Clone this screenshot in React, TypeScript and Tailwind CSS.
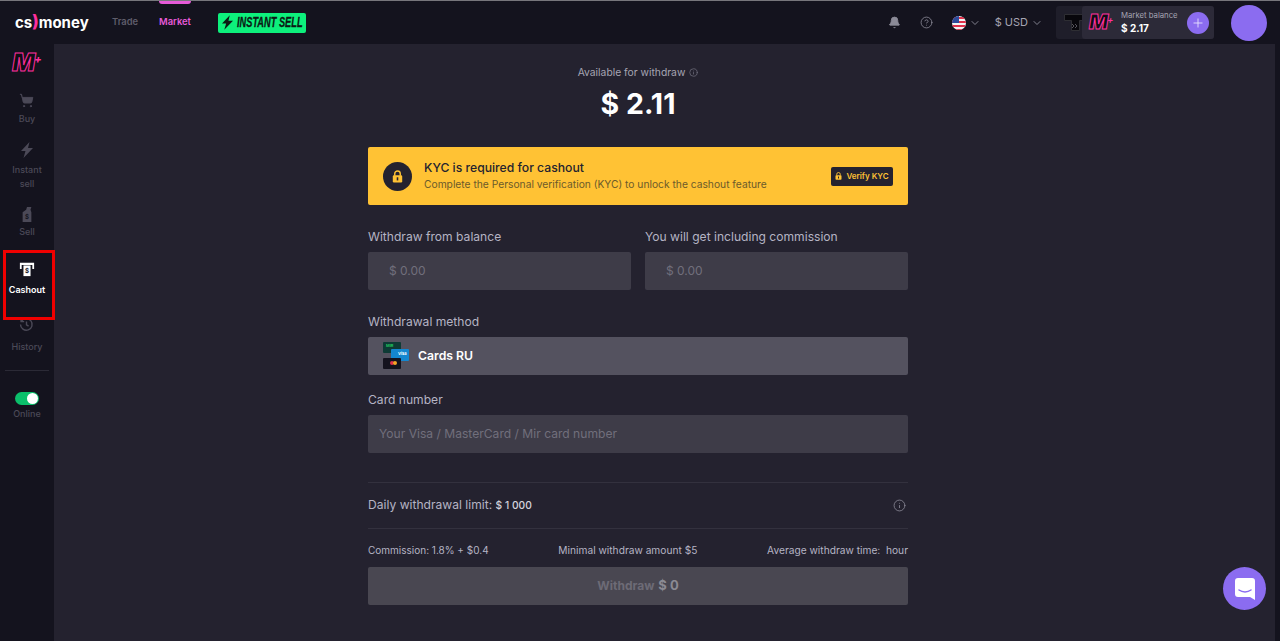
import React from 'react';
import { Bell, ChevronDown, CircleHelp, Info, Plus, ShoppingCart } from 'lucide-react';

const CashoutIcon = ({ className }: { className?: string }) => (
  <svg viewBox="0 0 18 18" className={className} fill="currentColor">
    <path d="M1 2h16v7h-2V4.500H3V9H1z" />
    <path d="M5 5h8v12H5z" />
    <text x="9" y="13.500" fontSize="7" fontWeight="700" textAnchor="middle" fill="#14131e">$</text>
  </svg>
);

const TagIcon = ({ className }: { className?: string }) => (
  <svg viewBox="0 0 16 18" className={className} fill="currentColor">
    <path d="M3 7l4-3 1-3h5l-1 3 1 3v11H3z" />
    <text x="8" y="14.500" fontSize="7" fontWeight="700" textAnchor="middle" fill="#14131e">$</text>
  </svg>
);

const HistoryIcon = ({ className }: { className?: string }) => (
  <svg viewBox="0 0 18 18" className={className} fill="none" stroke="currentColor" strokeWidth="1.700">
    <path d="M3 5a7 7 0 1 1-1.200 4" />
    <path d="M2.500 1.800v3.700h3.700" />
    <path d="M9 5.500V9.500l2.500 1.500" />
  </svg>
);

const BoltIcon = ({ className }: { className?: string }) => (
  <svg viewBox="0 0 12 16" className={className} fill="currentColor">
    <path d="M8.500 0 0 9h4.500L2.500 16 12 6H7z" />
  </svg>
);

const LockIcon = ({ className, hole }: { className?: string; hole: string }) => (
  <svg viewBox="0 0 14 16" className={className}>
    <path d="M3.500 7V4.500a3.500 3.500 0 0 1 7 0V7" fill="none" stroke="currentColor" strokeWidth="1.800" />
    <rect x="1" y="6.500" width="12" height="9" rx="1.500" fill="currentColor" />
    <rect x="6" y="9" width="2" height="4" fill={hole} />
  </svg>
);

// trade logo behind the market balance panel
const TradeLogo = ({ className }: { className?: string }) => (
  <svg viewBox="0 0 22 17" className={className}>
    <path d="M.5.500h21v6h-6v10h-8v-10h-7z" fill="#08070c" stroke="#2e2e33" />
    <path d="M8 10l2 2-2 2M11 10l2 2-2 2" fill="none" stroke="#55545c" strokeWidth="1" />
  </svg>
);

const MPlus = ({ size, plus }: { size: string; plus: string }) => (
  <span className={`${size} inline-flex items-start font-['Inter',sans-serif] font-black italic leading-none text-[#0f0d16] [-webkit-text-stroke:1px_#ff2f9e]`}>
    M
    <span className={`${plus} -ml-[1px] mt-[3px] font-bold text-[#ff2f9e] [-webkit-text-stroke:0]`}>+</span>
  </span>
);

const SideItem = ({ icon, label, labelClass, active }: { icon: React.ReactNode; label: React.ReactNode; labelClass: string; active?: boolean }) => (
  <div className={`flex flex-col items-center text-center text-[9px] leading-[14px] font-medium ${active ? 'text-white' : 'text-[#4b4957]'}`}>
    <div className="h-[15px] flex items-center justify-center">{icon}</div>
    <div className={labelClass}>{label}</div>
  </div>
);

const FieldLabel = ({ children }: { children: React.ReactNode }) => (
  <div className="text-[12.100px] leading-[18px] text-[#b5b4c4]">{children}</div>
);

export default function App() {
  return (
    <div className="h-[641px] w-[1280px] overflow-hidden bg-[#14131e] font-['Inter',sans-serif] flex flex-col">
      <header className="relative h-11 shrink-0 flex items-center bg-[#14131e] border-t border-[#77767c]">
        <div className="absolute left-[159px] top-0 h-[3px] w-8 rounded-b-sm bg-[#e65ad8]" />
        <div className="ml-[15px] -mt-[1px] w-[97px] flex items-center text-[15px] font-bold leading-none text-white">
          cs<span className="text-[#ff2f9e] font-extrabold text-[17px] -mt-[1px]">)</span>money
        </div>
        <span className="w-[47px] text-[9.400px] font-semibold text-[#5f5d6b]">Trade</span>
        <span className="w-[59px] text-[9.400px] font-semibold text-[#e65ad8]">Market</span>
        <div className="h-5 w-[88px] flex items-center rounded-[2px] bg-[#0df07c] pl-1 text-[#0b1a14] overflow-hidden">
          <BoltIcon className="w-[11px] h-[15px] shrink-0" />
          <span className="ml-1 font-['Liberation_Sans',sans-serif] text-[14px] font-bold italic whitespace-nowrap scale-x-[0.66] origin-left [-webkit-text-stroke:0.3px_#0b1a14]">INSTANT SELL</span>
        </div>
        <div className="ml-auto flex items-center text-[#8b8a97]">
          <Bell className="w-[13px] h-[13px] mr-[19px]" fill="currentColor" strokeWidth={1.500} />
          <CircleHelp className="w-[13px] h-[13px] mr-[19px]" strokeWidth={1.500} />
          <svg viewBox="0 0 14 14" className="w-[14px] h-[14px]">
            <clipPath id="flag"><circle cx="7" cy="7" r="7" /></clipPath>
            <g clipPath="url(#flag)">
              <rect width="14" height="14" fill="#f4f4f4" />
              <path d="M0 1h14v2H0zM0 5h14v2H0zM0 9h14v2H0zM0 13h14v1H0z" fill="#e0314b" />
              <rect width="7" height="7" fill="#2d4a9a" />
            </g>
          </svg>
          <ChevronDown className="w-3 h-3 ml-[3px] mr-[14px] text-[#a6a5b3]" strokeWidth={1.500} />
          <span className="text-[11px] text-[#a6a5b3]">$ USD</span>
          <ChevronDown className="w-3 h-3 ml-[3px] mr-[13px] text-[#a6a5b3]" strokeWidth={1.500} />
          <div className="relative h-[33px] w-[158px] rounded-[3px] bg-[#1f1e2a]">
            <TradeLogo className="absolute left-[8px] top-[8px] w-[22px] h-[17px]" />
            <div className="absolute right-0 top-0 h-full w-[132px] rounded-[3px] bg-[#2c2a38] flex items-center pl-[7px]">
              <div className="w-[32px]"><MPlus size="text-[20px]" plus="text-[9px]" /></div>
              <div>
                <div className="text-[7.750px] leading-[11px] text-[#a6a5b3] whitespace-nowrap">Market balance</div>
                <div className="text-[10px] leading-[14px] font-bold text-white">$ 2.17</div>
              </div>
              <div className="absolute right-[5px] top-[6px] w-[22px] h-[22px] rounded-full bg-[#8b6cf0] flex items-center justify-center">
                <Plus className="w-[14px] h-[14px] text-[#e9e4ff]" strokeWidth={1.500} />
              </div>
            </div>
          </div>
          <div className="ml-[17px] mr-[13px] w-[36px] h-[36px] rounded-full bg-[#8b6cf0]" />
        </div>
      </header>

      <div className="flex-1 flex min-h-0">
        <aside className="relative w-[54px] shrink-0 bg-[#14131e] flex flex-col items-center pt-[10px]">
          <div className="h-[18px] flex items-center"><MPlus size="text-[24px]" plus="text-[11px]" /></div>
          <div className="mt-[21px] flex flex-col items-center">
            <SideItem icon={<ShoppingCart className="w-[15px] h-[15px]" fill="currentColor" strokeWidth={1.500} />} label="Buy" labelClass="mt-[4px]" />
            <div className="mt-[16px]">
              <SideItem icon={<BoltIcon className="w-[12px] h-[16px]" />} label={<>Instant<br />sell</>} labelClass="mt-[6px]" />
            </div>
            <div className="mt-[15px]">
              <SideItem icon={<TagIcon className="w-[14px] h-[16px]" />} label="Sell" labelClass="mt-[4px]" />
            </div>
            <div className="mt-[22px]">
              <SideItem active icon={<CashoutIcon className="w-[16px] h-[16px]" />} label={<span className="font-semibold">Cashout</span>} labelClass="mt-[7px]" />
            </div>
            <div className="mt-[20px]">
              <SideItem icon={<HistoryIcon className="w-[15px] h-[15px]" />} label="History" labelClass="mt-[8px]" />
            </div>
          </div>
          <div className="mt-[16px] h-px w-[44px] bg-[#2b2a36]" />
          <div className="mt-[21px] w-[24px] h-[13px] rounded-full bg-[#0bbf6b] flex items-center justify-end pr-[1px]">
            <div className="w-[11px] h-[11px] rounded-full bg-white" />
          </div>
          <div className="mt-[2px] text-[9px] leading-[14px] font-medium text-[#4b4957]">Online</div>
          <div className="absolute z-10 left-[3px] top-[206px] h-[70px] w-[52px] border-[3px] border-[#f00000]" />
        </aside>

        <main className="relative flex-1 bg-[#24222f] flex justify-center pr-[53px]">
          <div className="w-[540px] flex flex-col pt-[21px]">
            <div className="flex items-center justify-center gap-1 text-[10.300px] leading-[14px] text-[#a6a5b3]">
              Available for withdraw <Info className="w-[9px] h-[9px] text-[#6f6e7c]" />
            </div>
            <div className="mt-[6px] text-center text-[28.500px] leading-[38px] font-bold text-white">$ 2.11</div>

            <div className="mt-[24px] h-[58px] rounded-[2px] bg-[#ffc234] flex items-center pl-[15px] pr-[15px]">
              <div className="w-[29px] h-[29px] rounded-full bg-[#24222f] flex items-center justify-center">
                <LockIcon className="w-[11px] h-[13px] text-[#ffc234]" hole="#24222f" />
              </div>
              <div className="ml-[12px] flex-1 pb-[2px]">
                <div className="text-[12.200px] leading-[18px] font-medium text-[#24222f]">KYC is required for cashout</div>
                <div className="text-[10.250px] leading-[15px] text-[#6b5a2b]">Complete the Personal verification (KYC) to unlock the cashout feature</div>
              </div>
              <div className="h-[19px] w-[62px] rounded-[2px] bg-[#24222f] flex items-center justify-center gap-1 text-[8px] font-semibold text-[#ffc234]">
                <LockIcon className="w-[7px] h-[8px]" hole="#24222f" />
                <span className="whitespace-nowrap">Verify KYC</span>
              </div>
            </div>

            <div className="mt-[23px] grid grid-cols-2 gap-[14px]">
              <div>
                <FieldLabel>Withdraw from balance</FieldLabel>
                <div className="mt-[6px] h-[38px] rounded-[2px] bg-[#3e3c48] flex items-center pl-[21px] text-[12px] text-[#716f7c]">$ 0.00</div>
              </div>
              <div>
                <FieldLabel>You will get including commission</FieldLabel>
                <div className="mt-[6px] h-[38px] rounded-[2px] bg-[#3e3c48] flex items-center pl-[21px] text-[12px] text-[#716f7c]">$ 0.00</div>
              </div>
            </div>

            <div className="mt-[23px]"><FieldLabel>Withdrawal method</FieldLabel></div>
            <div className="mt-[6px] h-[38px] rounded-[2px] bg-[#54525f] flex items-center pl-[15px]">
              <div className="relative w-[27px] h-[28px]">
                <div className="absolute left-0 top-0 w-[18px] h-[11px] rounded-[1px] bg-[#0e3b35] pl-[3px] text-[4px] leading-[8px] font-bold text-[#22c55e]">MIR</div>
                <div className="absolute left-[8px] top-[7px] w-[18px] h-[12px] rounded-[1px] bg-[#1487d0] pl-[7px] text-[4px] leading-[9px] font-bold text-white">Visa</div>
                <div className="absolute left-0 top-[16px] w-[18px] h-[11px] rounded-[1px] bg-[#14131e]">
                  <div className="absolute left-[7px] top-[3px] w-[4px] h-[4px] rounded-full bg-[#e0314b]" />
                  <div className="absolute left-[10px] top-[3px] w-[4px] h-[4px] rounded-full bg-[#f5a524]" />
                </div>
              </div>
              <span className="ml-[8px] text-[12.250px] font-semibold text-white">Cards RU</span>
            </div>

            <div className="mt-[16px]"><FieldLabel>Card number</FieldLabel></div>
            <div className="mt-[6px] h-[38px] rounded-[2px] bg-[#3e3c48] flex items-center pl-[11px] text-[12.100px] text-[#716f7c]">Your Visa / MasterCard / Mir card number</div>

            <div className="mt-[29px] h-[47px] border-y border-[#33313e] flex items-center justify-between">
              <div className="text-[12.100px] text-[#b5b4c4]">Daily withdrawal limit: <span className="text-[10.250px] font-medium text-[#d5d4de]">$ 1 000</span></div>
              <Info className="w-[13px] h-[13px] mr-[2px] text-[#8b8a97]" strokeWidth={1.500} />
            </div>

            <div className="mt-[14px] flex justify-between text-[10.200px] leading-[14px] text-[#b5b4c4]">
              <span className="text-[10px]">Commission: 1.8% + $0.4</span>
              <span>Minimal withdraw amount $5</span>
              <span>Average withdraw time:&nbsp; hour</span>
            </div>
            <div className="mt-[10px] h-[38px] rounded-[2px] bg-[#494751] flex items-center justify-center gap-1 font-bold">
              <span className="text-[12px] text-[#6d6b76]">Withdraw</span>
              <span className="text-[13px] text-[#8b8a93]">$ 0</span>
            </div>
          </div>

          <div className="absolute right-[9px] bottom-[31px] w-[43px] h-[43px] rounded-full bg-[#8b6cf0] flex items-center justify-center">
            <svg viewBox="0 0 24 24" className="w-[24px] h-[24px]">
              <path d="M5 1h14a3 3 0 0 1 3 3v19l-5-3H5a3 3 0 0 1-3-3V4a3 3 0 0 1 3-3z" fill="#fff" />
              <path d="M6 13c3.500 2.500 8.500 2.500 12 0" fill="none" stroke="#8b6cf0" strokeWidth="1.500" strokeLinecap="round" />
            </svg>
          </div>
        </main>
        <div className="w-[5px] shrink-0 bg-[#14131e]" />
      </div>
    </div>
  );
}
